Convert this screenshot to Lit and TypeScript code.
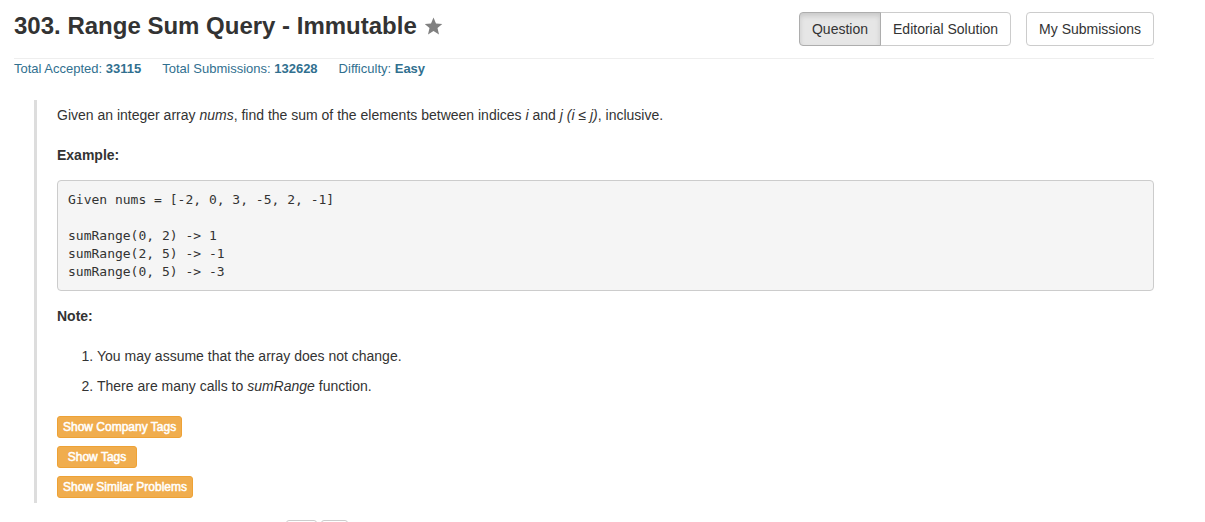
import { LitElement, html, css } from "lit";
import { customElement, state } from "lit/decorators.js";
import { classMap } from "lit/directives/class-map.js";

const EXAMPLE = `Given nums = [-2, 0, 3, -5, 2, -1]

sumRange(0, 2) -> 1
sumRange(2, 5) -> -1
sumRange(0, 5) -> -3`;

@customElement("app-root")
export class AppRoot extends LitElement {
  @state() private view = "Question";

  static styles = css`
    :host {
      display: block;
      height: 100vh;
      overflow: hidden;
      background: #fff;
      color: #333;
      font: 14px/20px "Liberation Sans", Arial, sans-serif;
    }
    * {
      box-sizing: border-box;
    }
    .page {
      padding: 12px 51px 0 14px;
    }
    .header {
      display: flex;
      justify-content: space-between;
      align-items: flex-start;
      padding-bottom: 12px;
      border-bottom: 1px solid #eee;
    }
    .heading {
      display: flex;
      align-items: center;
      gap: 8px;
    }
    h1 {
      margin: 0;
      font-size: 24px;
      line-height: 28px;
      font-weight: 700;
    }
    .star {
      display: block;
      padding: 0;
      border: 0;
      background: none;
      color: #808080;
    }
    .star svg {
      display: block;
    }
    .actions {
      display: flex;
      gap: 15px;
    }
    .group {
      display: flex;
    }
    .btn {
      padding: 6px 12px;
      border: 1px solid #ccc;
      border-radius: 4px;
      background: #fff;
      color: #333;
      font: inherit;
      white-space: nowrap;
    }
    .group .btn:first-child {
      border-radius: 4px 0 0 4px;
    }
    .group .btn:last-child {
      margin-left: -1px;
      border-radius: 0 4px 4px 0;
    }
    .btn.active {
      z-index: 1;
      border-color: #adadad;
      background: #e6e6e6;
      box-shadow: inset 0 3px 5px rgba(0, 0, 0, 0.125);
    }
    .stats {
      display: flex;
      gap: 21px;
      font-size: 13px;
      color: #31708f;
    }
    .problem {
      margin: 21px 0 0 20px;
      padding: 5px 0 5px 20px;
      border-left: 3px solid #ddd;
    }
    p {
      margin: 0 0 20px;
    }
    .label {
      margin-bottom: 15px;
    }
    pre {
      margin: 0 0 15px;
      padding: 10px 10px 9px;
      border: 1px solid #ccc;
      border-radius: 4px;
      background: #f5f5f5;
      font: 13px/18px "DejaVu Sans Mono", monospace;
    }
    ol {
      margin: 20px 0;
      padding-left: 40px;
    }
    li + li {
      margin-top: 10px;
    }
    .tags {
      display: flex;
      flex-direction: column;
      align-items: flex-start;
      gap: 8px;
    }
    .tag {
      min-width: 80px;
      padding: 1px 5px;
      border: 1px solid #eea236;
      border-radius: 3px;
      background: #f0ad4e;
      color: #fff;
      font: 12px/18px "Liberation Sans", Arial, sans-serif;
      -webkit-text-stroke: 0.5px #fff;
    }
    .toolbar {
      display: flex;
      gap: 4px;
      margin: 17px 0 0 272px;
    }
    .tool {
      width: 31px;
      height: 30px;
      border: 1px solid #ccc;
      border-radius: 3px;
      background: #fff;
    }
    .tool + .tool {
      width: 27px;
    }
  `;

  private viewButton(name: string) {
    return html`<button
      class=${classMap({ btn: true, active: this.view === name })}
      @click=${() => (this.view = name)}
    >${name}</button>`;
  }

  render() {
    return html`
      <main class="page">
        <header class="header">
          <div class="heading">
            <h1>303. Range Sum Query - Immutable</h1>
            <button class="star" aria-label="Favorite">
              <svg width="18" height="18" viewBox="0 0 18 18" fill="currentColor">
                <path d="M8.5 .6l2.5 5.8 6.3.5-4.8 4.2 1.5 6.3-5.5-3.3L3 17.4l1.5-6.3L-.3 6.9 6 6.4z" />
              </svg>
            </button>
          </div>
          <div class="actions">
            <div class="group">
              ${this.viewButton("Question")}${this.viewButton("Editorial Solution")}
            </div>
            <button class="btn">My Submissions</button>
          </div>
        </header>
        <div class="stats">
          <span>Total Accepted: <strong>33115</strong></span>
          <span>Total Submissions: <strong>132628</strong></span>
          <span>Difficulty: <strong>Easy</strong></span>
        </div>
        <section class="problem">
          <p>Given an integer array <em>nums</em>, find the sum of the elements between indices <em>i</em> and <em>j</em> <em>(i ≤ j)</em>, inclusive.</p>
          <p class="label"><strong>Example:</strong></p>
          <pre>${EXAMPLE}</pre>
          <p class="label"><strong>Note:</strong></p>
          <ol>
            <li>You may assume that the array does not change.</li>
            <li>There are many calls to <em>sumRange</em> function.</li>
          </ol>
          <div class="tags">
            <button class="tag">Show Company Tags</button>
            <button class="tag">Show Tags</button>
            <button class="tag">Show Similar Problems</button>
          </div>
        </section>
        <div class="toolbar">
          <button class="tool" aria-label="Previous"></button>
          <button class="tool" aria-label="Next"></button>
        </div>
      </main>
    `;
  }
}
